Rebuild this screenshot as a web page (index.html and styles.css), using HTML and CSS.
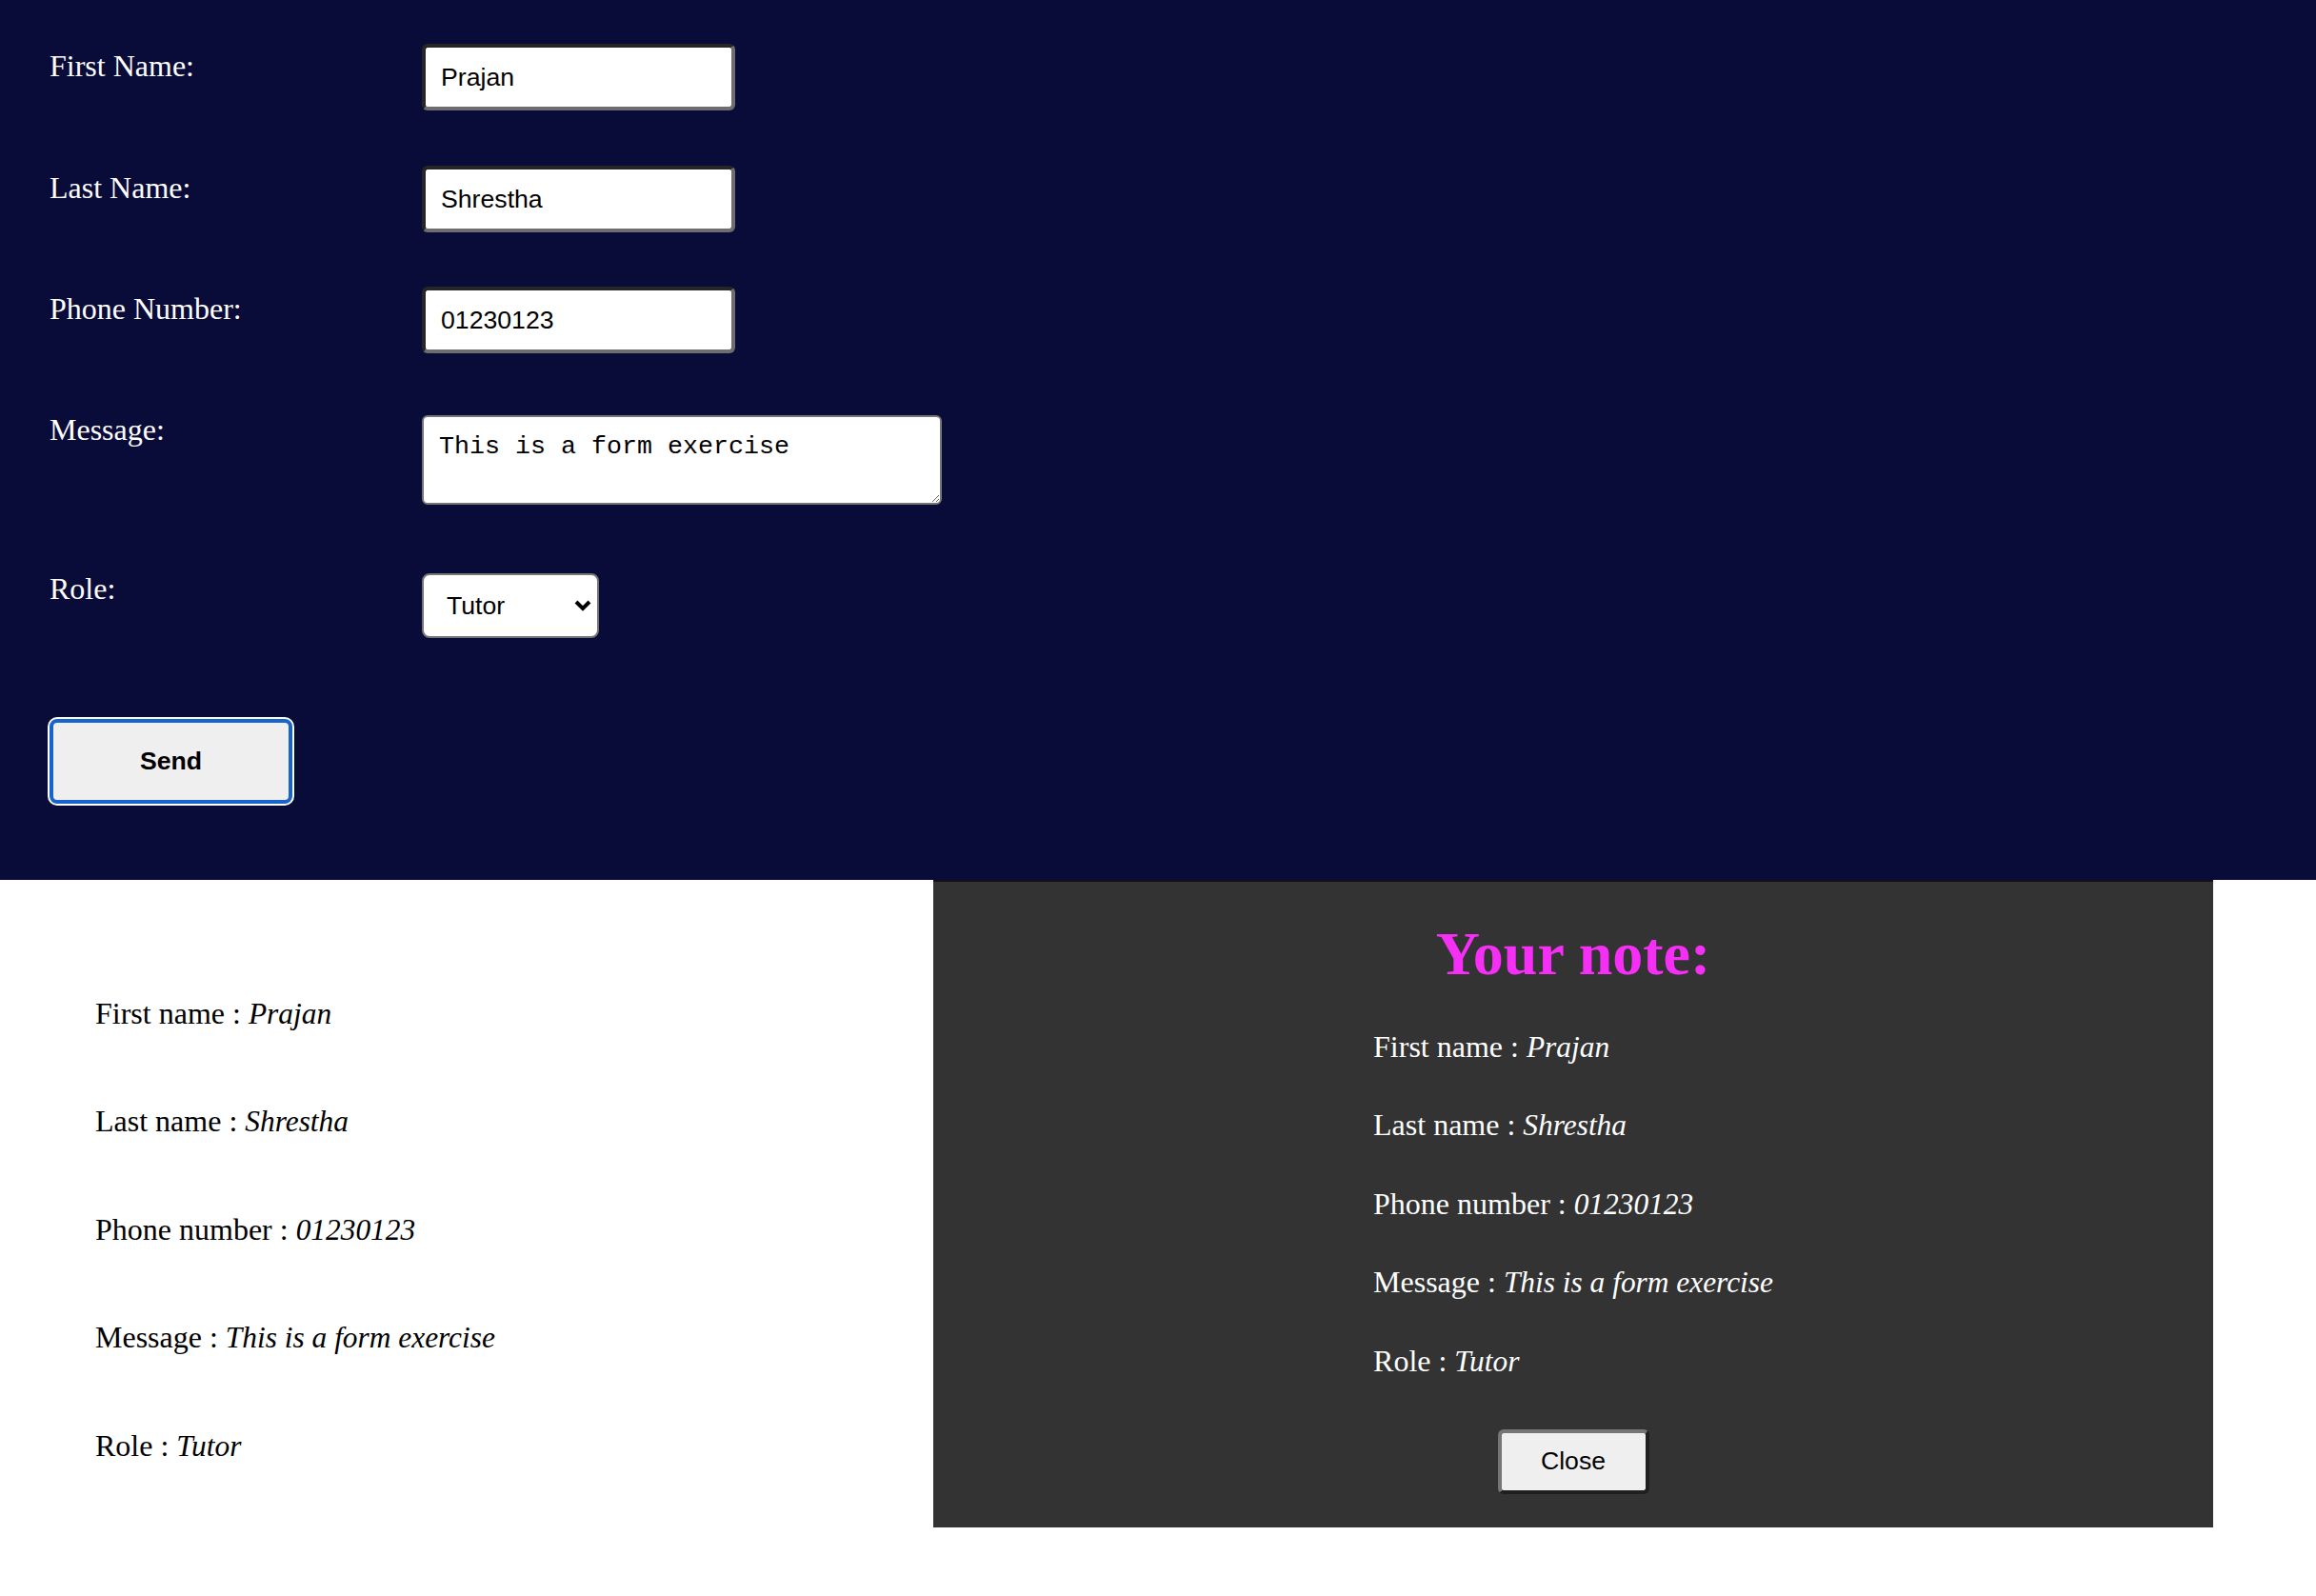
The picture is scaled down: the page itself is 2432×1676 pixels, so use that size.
FILE: index.html
```html
<!DOCTYPE html>
<html lang="en">
<head>
<meta charset="utf-8">
<title>Form exercise</title>
<link rel="stylesheet" href="styles.css">
</head>
<body>
<section class="form-area">
  <form class="form">
    <div class="row row-first">
      <label class="lbl lbl-input" for="fn">First Name:</label>
      <input class="field" id="fn" type="text" value="Prajan">
    </div>
    <div class="row row-last">
      <label class="lbl lbl-input" for="ln">Last Name:</label>
      <input class="field" id="ln" type="text" value="Shrestha">
    </div>
    <div class="row row-phone">
      <label class="lbl lbl-input" for="ph">Phone Number:</label>
      <input class="field" id="ph" type="text" value="01230123">
    </div>
    <div class="row row-msg">
      <label class="lbl" for="msg">Message:</label>
      <textarea class="area" id="msg">This is a form exercise</textarea>
    </div>
    <div class="row row-role">
      <label class="lbl" for="role">Role:</label>
      <span class="select-wrap">
        <select class="select" id="role"><option>Tutor</option><option>Student</option></select>
        <svg class="chev" width="18" height="12" viewBox="0 0 18 12"><path d="M2 2 L9 9 L16 2" fill="none" stroke="#000" stroke-width="4"/></svg>
      </span>
    </div>
    <div class="send-row">
      <button type="button" class="send">Send</button>
    </div>
  </form>
</section>
<section class="results">
  <div class="summary">
    <p class="item">First name : <em class="val">Prajan</em></p>
    <p class="item">Last name : <em class="val">Shrestha</em></p>
    <p class="item">Phone number : <em class="val">01230123</em></p>
    <p class="item">Message : <em class="val">This is a form exercise</em></p>
    <p class="item">Role : <em class="val">Tutor</em></p>
  </div>
  <div class="note">
    <h1 class="note-title">Your note:</h1>
    <div class="note-list">
      <p class="note-item">First name : <em class="val">Prajan</em></p>
      <p class="note-item">Last name : <em class="val">Shrestha</em></p>
      <p class="note-item">Phone number : <em class="val">01230123</em></p>
      <p class="note-item">Message : <em class="val">This is a form exercise</em></p>
      <p class="note-item">Role : <em class="val">Tutor</em></p>
    </div>
    <button type="button" class="close">Close</button>
  </div>
</section>
</body>
</html>
```
FILE: styles.css
```css
html, body {
  margin: 0;
  padding: 0;
  background: #ffffff;
}
body {
  font-family: "Liberation Serif", "Times New Roman", serif;
  font-size: 32px;
}
.form-area {
  background: #090b39;
  height: 924px;
  box-sizing: border-box;
  padding: 46px 0 0 52px;
}
.form {
  display: flex;
  flex-direction: column;
}
.row {
  display: flex;
  align-items: flex-start;
}
.row-last { margin-top: 58px; }
.row-phone { margin-top: 57px; }
.row-msg { margin-top: 61.5px; }
.row-role { margin-top: 70.5px; }
.lbl {
  width: 391px;
  flex: none;
  color: #ffffff;
  font-size: 32px;
  line-height: 36px;
}
.lbl-input { margin-top: 5px; }
.field {
  box-sizing: border-box;
  width: 329px;
  height: 70px;
  margin: 0;
  padding: 0 16px;
  border: 4px solid;
  border-color: #262626 #6e6e6e #6e6e6e #262626;
  border-radius: 6px;
  background: #ffffff;
  color: #000000;
  font-family: "Liberation Sans", Arial, sans-serif;
  font-size: 26.67px;
  outline: none;
}
.area {
  box-sizing: border-box;
  width: 546px;
  height: 94px;
  margin: 3px 0 0 0;
  padding: 16px;
  border: 2px solid #767676;
  border-radius: 6px;
  background: #ffffff;
  color: #000000;
  font-family: "Liberation Mono", "Courier New", monospace;
  font-size: 26.67px;
  line-height: 30px;
}
.select-wrap {
  position: relative;
  display: inline-block;
  margin-top: 2px;
}
.select {
  box-sizing: border-box;
  width: 186px;
  height: 68px;
  margin: 0;
  padding: 0 0 0 24px;
  border: 2px solid #767676;
  border-radius: 8px;
  background: #ffffff;
  color: #000000;
  font-family: "Liberation Sans", Arial, sans-serif;
  font-size: 26.67px;
  -webkit-appearance: none;
  appearance: none;
}
.chev {
  position: absolute;
  right: 8px;
  top: 28px;
  pointer-events: none;
}
.send-row {
  margin-top: 84.5px;
}
.send {
  box-sizing: border-box;
  width: 255px;
  height: 89px;
  margin: 0;
  border: 4px solid #1664cc;
  border-radius: 8px;
  box-shadow: 0 0 0 2px #ffffff;
  background: #efefef;
  color: #000000;
  font-family: "Liberation Sans", Arial, sans-serif;
  font-size: 26.67px;
  font-weight: bold;
}
.results {
  display: flex;
  align-items: flex-start;
}
.summary {
  width: 980px;
  flex: none;
  box-sizing: border-box;
  padding: 122px 0 0 100px;
  display: flex;
  flex-direction: column;
  gap: 77.4px;
}
.item, .note-item {
  margin: 0;
  font-size: 32px;
  line-height: 36px;
  white-space: nowrap;
}
.item { color: #000000; }
.val {
  font-family: "Liberation Serif", "Times New Roman", serif;
  font-style: italic;
  font-size: 31.4px;
  line-height: 1;
}
.note {
  width: 1344px;
  height: 680px;
  flex: none;
  box-sizing: border-box;
  background: #333333;
  border-top: 2px solid #121214;
  display: flex;
  flex-direction: column;
  align-items: center;
}
.note-title {
  margin: 40px 0 0 0;
  color: #f52ff5;
  font-size: 64px;
  font-weight: bold;
  line-height: 71px;
}
.note-list {
  margin-top: 44px;
  display: flex;
  flex-direction: column;
  gap: 46.4px;
  color: #ffffff;
}
.close {
  box-sizing: border-box;
  width: 159px;
  height: 68px;
  margin-top: 54px;
  border: 4px solid;
  border-color: #767676 #1f1f1f #1f1f1f #767676;
  border-radius: 6px;
  background: #efefef;
  color: #000000;
  font-family: "Liberation Sans", Arial, sans-serif;
  font-size: 26.67px;
}
```
